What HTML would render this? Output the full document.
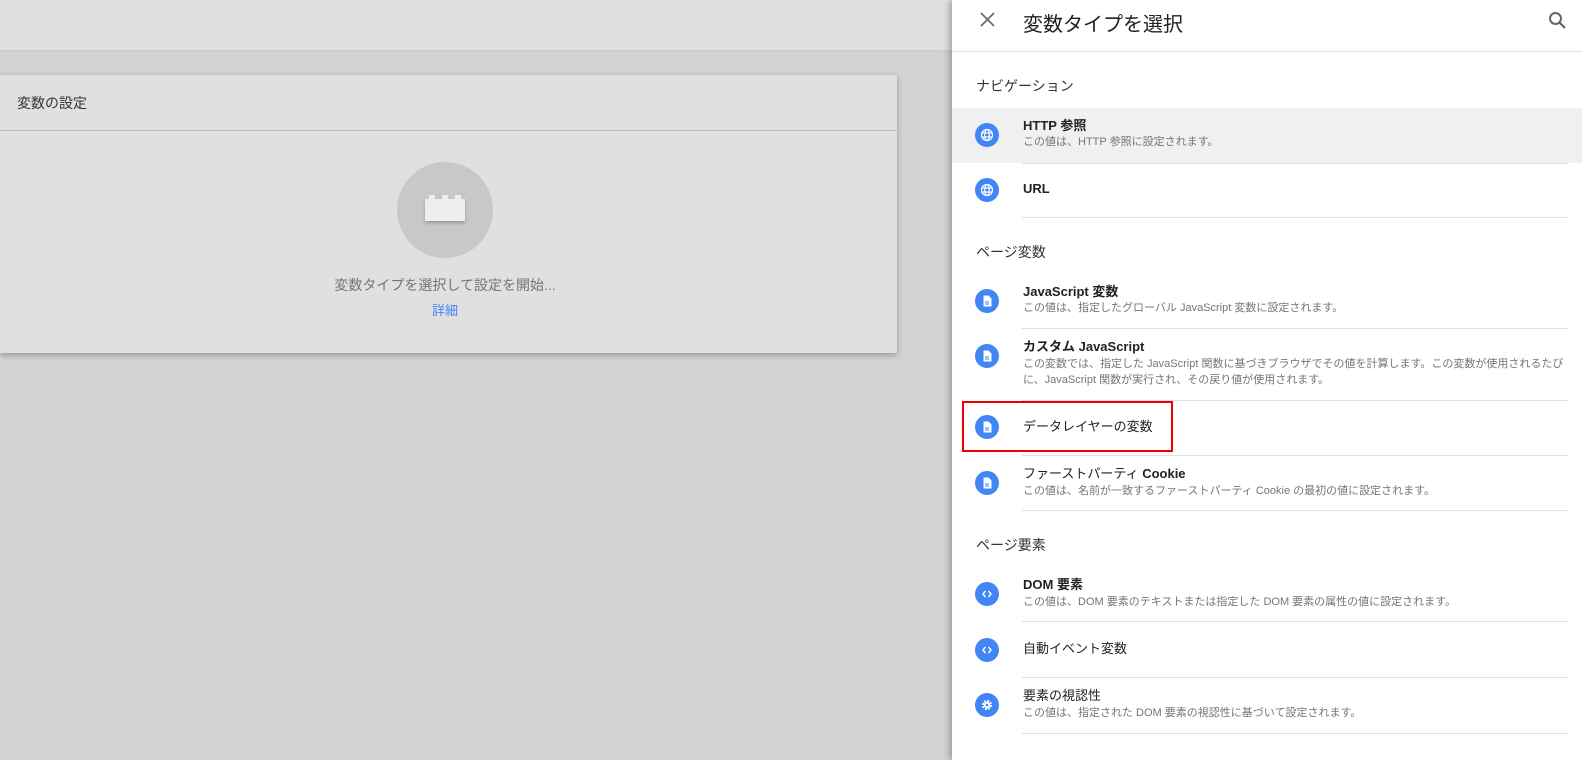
<!DOCTYPE html>
<html><head><meta charset="utf-8"><style>
*{margin:0;padding:0;box-sizing:border-box}
body{width:1582px;height:760px;overflow:hidden;background:#d3d3d3;font-family:"Liberation Sans","Noto Sans CJK JP",sans-serif;position:relative;color:#212121}
.a{position:absolute;white-space:nowrap}
.top{left:0;top:0;width:952px;height:51px;background:#e0e0e0;border-bottom:1px solid #c8c8c8}
.card{left:0;top:75px;width:897px;height:278px;background:#e0e0e0;box-shadow:0 2px 6px rgba(0,0,0,.3)}
.panel{left:952px;top:0;width:630px;height:760px;background:#fff;box-shadow:-3px 0 6px rgba(0,0,0,.25)}
.sec{font-size:14px;color:#333;left:24px;line-height:18px}
.t{font-size:13px;font-weight:bold;color:#222;left:71px;line-height:16px}
.t2{font-size:13px;color:#222;left:71px;line-height:16px}
.s{font-size:11px;color:#757575;left:71px;line-height:16px}
.d{left:70px;width:546px;height:1px;background:#e0e0e0}
.ic{left:23px;width:24px;height:24px;border-radius:50%;background:#4285f4}
.ic svg{position:absolute;left:5px;top:5px}
</style></head><body>
<div class="a top"></div>
<div class="a card">
 <div class="a" style="left:17px;top:18px;font-size:14px;color:#333">変数の設定</div>
 <div class="a" style="left:0;top:55px;width:897px;height:1px;background:#bdbdbd"></div>
 <div class="a" style="left:397px;top:87px;width:96px;height:96px;border-radius:50%;background:#c8c8c8"></div>
 <div class="a" style="left:425px;top:124px;width:40px;height:22px;background:#eee;box-shadow:0 2px 3px rgba(0,0,0,.25)"></div>
 <div class="a" style="left:429px;top:120px;width:6px;height:5px;background:#eee"></div>
 <div class="a" style="left:442px;top:120px;width:6px;height:5px;background:#eee"></div>
 <div class="a" style="left:455px;top:120px;width:6px;height:5px;background:#eee"></div>
 <div class="a" style="left:0;width:890px;text-align:center;top:200px;font-size:14px;color:#757575">変数タイプを選択して設定を開始...</div>
 <div class="a" style="left:0;width:890px;text-align:center;top:225px;font-size:13px;color:#4285f4">詳細</div>
</div>
<div class="a panel">
 <svg class="a" style="left:28px;top:12px" width="15" height="15" viewBox="0 0 15 15"><path d="M1 1L14 14M14 1L1 14" stroke="#666" stroke-width="1.6"/></svg>
 <div class="a" style="left:71px;top:8px;font-size:20px;color:#212121">変数タイプを選択</div>
 <svg class="a" style="left:596px;top:11px" width="20" height="20" viewBox="0 0 20 20"><circle cx="7.5" cy="7.5" r="5.5" stroke="#666" stroke-width="2" fill="none"/><line x1="11.5" y1="11.5" x2="17" y2="17" stroke="#666" stroke-width="2.2"/></svg>
 <div class="a" style="left:0;top:51px;width:630px;height:1px;background:#e0e0e0"></div>

 <div class="a sec" style="top:77px">ナビゲーション</div>
 <div class="a" style="left:0;top:108px;width:630px;height:55px;background:#f0f0f0"></div>
 <div class="a ic" style="top:123px"><svg width="14" height="14" viewBox="0 0 14 14"><g stroke="#fff" stroke-width="1.2" fill="none"><circle cx="7" cy="7" r="5.5"/><ellipse cx="7" cy="7" rx="2.3" ry="5.5"/><line x1="1.5" y1="5" x2="12.5" y2="5"/><line x1="1.5" y1="9" x2="12.5" y2="9"/></g></svg></div>
 <div class="a t" style="top:118px">HTTP 参照</div>
 <div class="a s" style="top:134px">この値は、HTTP 参照に設定されます。</div>
 <div class="a d" style="top:163px"></div>
 <div class="a ic" style="top:178px"><svg width="14" height="14" viewBox="0 0 14 14"><g stroke="#fff" stroke-width="1.2" fill="none"><circle cx="7" cy="7" r="5.5"/><ellipse cx="7" cy="7" rx="2.3" ry="5.5"/><line x1="1.5" y1="5" x2="12.5" y2="5"/><line x1="1.5" y1="9" x2="12.5" y2="9"/></g></svg></div>
 <div class="a t" style="top:181px">URL</div>
 <div class="a d" style="top:217px"></div>

 <div class="a sec" style="top:243px">ページ変数</div>
 <div class="a ic" style="top:289px"><svg width="14" height="14" viewBox="0 0 14 14"><path d="M3.5 1.5h5l3 3v8h-8z" fill="#fff"/><path d="M5 8h4M5 10h4" stroke="#4285f4" stroke-width="1"/></svg></div>
 <div class="a t" style="top:284px">JavaScript 変数</div>
 <div class="a s" style="top:300px">この値は、指定したグローバル JavaScript 変数に設定されます。</div>
 <div class="a d" style="top:328px"></div>
 <div class="a ic" style="top:344px"><svg width="14" height="14" viewBox="0 0 14 14"><path d="M3.5 1.5h5l3 3v8h-8z" fill="#fff"/><path d="M5 8h4M5 10h4" stroke="#4285f4" stroke-width="1"/></svg></div>
 <div class="a t" style="top:339px">カスタム JavaScript</div>
 <div class="a s" style="top:356px">この変数では、指定した JavaScript 関数に基づきブラウザでその値を計算します。この変数が使用されるたび</div>
 <div class="a s" style="top:372px">に、JavaScript 関数が実行され、その戻り値が使用されます。</div>
 <div class="a d" style="top:400px"></div>
 <div class="a ic" style="top:415px"><svg width="14" height="14" viewBox="0 0 14 14"><path d="M3.5 1.5h5l3 3v8h-8z" fill="#fff"/><path d="M5 8h4M5 10h4" stroke="#4285f4" stroke-width="1"/></svg></div>
 <div class="a t2" style="top:419px">データレイヤーの変数</div>
 <div class="a" style="left:10px;top:401px;width:211px;height:51px;border:2px solid #e00"></div>
 <div class="a d" style="top:455px"></div>
 <div class="a ic" style="top:471px"><svg width="14" height="14" viewBox="0 0 14 14"><path d="M3.5 1.5h5l3 3v8h-8z" fill="#fff"/><path d="M5 8h4M5 10h4" stroke="#4285f4" stroke-width="1"/></svg></div>
 <div class="a t" style="top:466px;font-weight:normal">ファーストパーティ <b>Cookie</b></div>
 <div class="a s" style="top:483px">この値は、名前が一致するファーストパーティ Cookie の最初の値に設定されます。</div>
 <div class="a d" style="top:510px"></div>

 <div class="a sec" style="top:536px">ページ要素</div>
 <div class="a ic" style="top:582px"><svg width="14" height="14" viewBox="0 0 14 14"><path d="M5.5 4L3 7l2.5 3M8.5 4L11 7l-2.5 3" stroke="#fff" stroke-width="1.4" fill="none"/></svg></div>
 <div class="a t" style="top:577px">DOM 要素</div>
 <div class="a s" style="top:594px">この値は、DOM 要素のテキストまたは指定した DOM 要素の属性の値に設定されます。</div>
 <div class="a d" style="top:621px"></div>
 <div class="a ic" style="top:638px"><svg width="14" height="14" viewBox="0 0 14 14"><path d="M5.5 4L3 7l2.5 3M8.5 4L11 7l-2.5 3" stroke="#fff" stroke-width="1.4" fill="none"/></svg></div>
 <div class="a t2" style="top:641px">自動イベント変数</div>
 <div class="a d" style="top:677px"></div>
 <div class="a ic" style="top:693px"><svg width="14" height="14" viewBox="0 0 14 14"><circle cx="7" cy="7" r="3.8" fill="none" stroke="#fff" stroke-width="2.6" stroke-dasharray="1.8 1.2"/><circle cx="7" cy="7" r="3.2" fill="#fff"/><circle cx="7" cy="7" r="1.3" fill="#4285f4"/></svg></div>
 <div class="a t2" style="top:688px">要素の視認性</div>
 <div class="a s" style="top:705px">この値は、指定された DOM 要素の視認性に基づいて設定されます。</div>
 <div class="a d" style="top:733px"></div>
</div>
</body></html>
